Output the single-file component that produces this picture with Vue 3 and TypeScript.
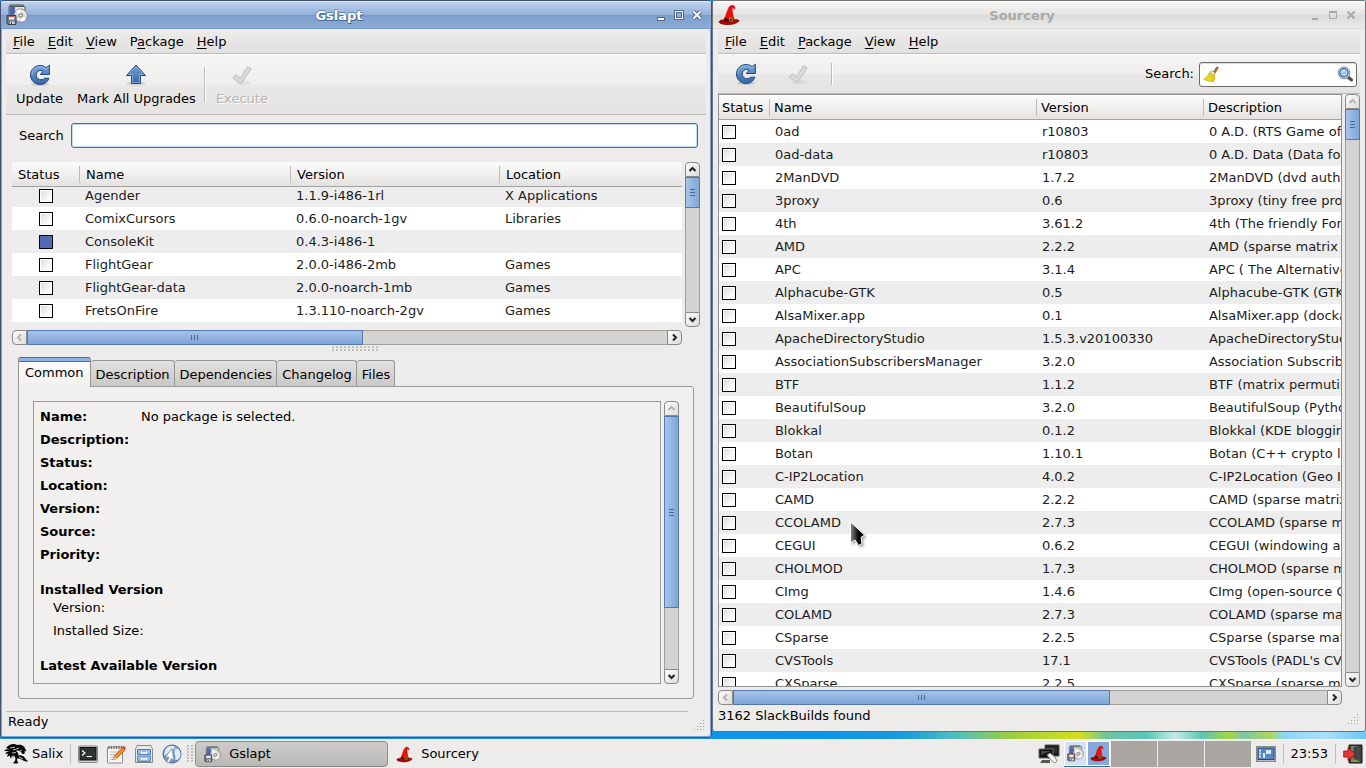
<script setup lang="ts">
import { onMounted, ref } from 'vue'

interface MenuEntry {
  before: string
  key: string
  after: string
}
interface Installed {
  name: string
  version: string
  location: string
  installed?: boolean
}
type Build = [name: string, version: string, description: string]

const gslaptMenu: MenuEntry[] = [
  { before: '', key: 'F', after: 'ile' },
  { before: '', key: 'E', after: 'dit' },
  { before: '', key: 'V', after: 'iew' },
  { before: 'P', key: 'a', after: 'ckage' },
  { before: '', key: 'H', after: 'elp' },
]
const sourceryMenu: MenuEntry[] = [
  { before: '', key: 'F', after: 'ile' },
  { before: '', key: 'E', after: 'dit' },
  { before: '', key: 'P', after: 'ackage' },
  { before: '', key: 'V', after: 'iew' },
  { before: '', key: 'H', after: 'elp' },
]

const packages: Installed[] = [
  { name: 'Agender', version: '1.1.9-i486-1rl', location: 'X Applications' },
  { name: 'ComixCursors', version: '0.6.0-noarch-1gv', location: 'Libraries' },
  { name: 'ConsoleKit', version: '0.4.3-i486-1', location: '', installed: true },
  { name: 'FlightGear', version: '2.0.0-i486-2mb', location: 'Games' },
  { name: 'FlightGear-data', version: '2.0.0-noarch-1mb', location: 'Games' },
  { name: 'FretsOnFire', version: '1.3.110-noarch-2gv', location: 'Games' },
  { name: '', version: '', location: '' },
]

const builds: Build[] = [
  ['0ad', 'r10803', '0 A.D. (RTS Game of Ancient Warfare)'],
  ['0ad-data', 'r10803', '0 A.D. Data (Data for 0ad)'],
  ['2ManDVD', '1.7.2', '2ManDVD (dvd authoring)'],
  ['3proxy', '0.6', '3proxy (tiny free proxy server)'],
  ['4th', '3.61.2', '4th (The friendly Forth Compiler)'],
  ['AMD', '2.2.2', 'AMD (sparse matrix ordering)'],
  ['APC', '3.1.4', 'APC ( The Alternative PHP Cache)'],
  ['Alphacube-GTK', '0.5', 'Alphacube-GTK (GTK theme)'],
  ['AlsaMixer.app', '0.1', 'AlsaMixer.app (dockapp mixer)'],
  ['ApacheDirectoryStudio', '1.5.3.v20100330', 'ApacheDirectoryStudio (LDAP tool)'],
  ['AssociationSubscribersManager', '3.2.0', 'Association Subscribers Manager'],
  ['BTF', '1.1.2', 'BTF (matrix permuting)'],
  ['BeautifulSoup', '3.2.0', 'BeautifulSoup (Python parser)'],
  ['Blokkal', '0.1.2', 'Blokkal (KDE blogging client)'],
  ['Botan', '1.10.1', 'Botan (C++ crypto library)'],
  ['C-IP2Location', '4.0.2', 'C-IP2Location (Geo IP library)'],
  ['CAMD', '2.2.2', 'CAMD (sparse matrix ordering)'],
  ['CCOLAMD', '2.7.3', 'CCOLAMD (sparse matrix)'],
  ['CEGUI', '0.6.2', 'CEGUI (windowing and widgets)'],
  ['CHOLMOD', '1.7.3', 'CHOLMOD (sparse matrix)'],
  ['CImg', '1.4.6', 'CImg (open-source C++ toolkit)'],
  ['COLAMD', '2.7.3', 'COLAMD (sparse matrix)'],
  ['CSparse', '2.2.5', 'CSparse (sparse matrix)'],
  ['CVSTools', '17.1', "CVSTools (PADL's CVS tools)"],
  ['CXSparse', '2.2.5', 'CXSparse (sparse matrix)'],
]

const tabs = ['Common', 'Description', 'Dependencies', 'Changelog', 'Files']
const activeTab = ref('Common')
const fields = ['Name:', 'Description:', 'Status:', 'Location:', 'Version:', 'Source:', 'Priority:']

const gslaptSearch = ref('')
const sourcerySearch = ref('')
const packageList = ref<HTMLElement | null>(null)

onMounted(() => {
  if (packageList.value) packageList.value.scrollTop = 3
})
</script>

<template>
  <svg class="defs" aria-hidden="true">
    <defs>
      <linearGradient id="blueFill" x1="0" y1="0" x2="0" y2="1">
        <stop offset="0" stop-color="#7ba5d8" />
        <stop offset="1" stop-color="#3465a4" />
      </linearGradient>
      <linearGradient id="pointerFill" x1="0" y1="0" x2="1" y2="0">
        <stop offset="0" stop-color="#8a8a8a" />
        <stop offset=".6" stop-color="#000" />
      </linearGradient>
      <symbol id="refresh" viewBox="0 0 24 24">
        <ellipse cx="12" cy="21" rx="9" ry="2" fill="#000" opacity=".12" />
        <path d="M18 4.700 21.400 2.200V11.500H12.300L15 8.200C12.500 6.500 8.300 8 8.300 12C8.300 16.500 13.600 18.200 16.800 15.200H21C19.400 19.400 15.900 21.500 12 21.500C6.800 21.500 2.500 17.300 2.500 12C2.500 6.700 6.800 2.500 12 2.500C14.400 2.500 16.600 3.200 18 4.700Z" fill="url(#blueFill)" stroke="#204a87" stroke-width="1" />
        <path d="M4 12A8 8 0 0 1 17.500 6L20.400 4.200" fill="none" stroke="#9dc0ea" stroke-width=".9" />
      </symbol>
      <symbol id="upgrade" viewBox="0 0 24 24">
        <ellipse cx="12" cy="20.500" rx="10" ry="2" fill="#000" opacity=".12" />
        <path d="M12 2 21.500 12.500H16.500V20.500H7.500V12.500H2.500Z" fill="url(#blueFill)" stroke="#204a87" />
        <path d="M12 3.600 19.200 11.500H15.500V19.500H8.500V11.500H4.800Z" fill="none" stroke="#8fb4e0" stroke-width=".8" />
      </symbol>
      <symbol id="apply" viewBox="0 0 24 24">
        <ellipse cx="13" cy="20" rx="8" ry="2" fill="#000" opacity=".05" />
        <path d="M3 15 6.300 11.700 10.300 15.300 17.300 3.800 21.300 5.800 11.200 20.800Z" fill="#d8dad6" stroke="#bfc1bd" stroke-linejoin="round" />
      </symbol>
      <symbol id="package" viewBox="0 0 22 22">
        <path d="M4 1H17L19 3V15H3V3Z" fill="#e5e5e1" stroke="#555753" />
        <path d="M3.500 3H9V14H3.500Z" fill="#4d66b5" />
        <path d="M4 1.500H17.500L18.500 3H4Z" fill="#555753" />
        <circle cx="14.700" cy="11.500" r="6.600" fill="#e3e3e0" stroke="#888a85" />
        <path d="M14.700 11.500 10 7A6 6 0 0 1 15 5.500ZM14.700 11.500 20 15A6 6 0 0 1 15 17.500Z" fill="#fff" />
        <circle cx="14.700" cy="11.500" r="2" fill="#b8bab5" stroke="#7d7f7a" />
        <circle cx="14.700" cy="11.500" r=".7" fill="#fff" />
        <path d="M1 11.500H10V20.500H2L1 19.500Z" fill="#69798c" stroke="#3d4043" />
        <path d="M3 12H8.500V15.500H3Z" fill="#fff" />
        <path d="M3 12H8.500V13.300H3Z" fill="#d34b3f" />
        <path d="M4 17.500H8.500V20H4Z" fill="#dfe2e4" />
        <path d="M5 18H6V20H5Z" fill="#333" />
      </symbol>
      <symbol id="hat" viewBox="0 0 24 24">
        <path d="M6.500 17C9 13 9.500 8 11.500 4.500C13 1.500 16 .6 17.600 2.300C18.700 3.400 18.700 5.200 18 5.800C17.400 4.600 16.500 4.300 15.300 5C16 9 16.200 14 17.800 17.500C15 20.500 9 20.500 6.500 17Z" fill="#f40a06" stroke="#a80000" stroke-width=".5" />
        <path d="M1 19.500C2.500 17 5 17.300 7 17.500C10 19.200 14.500 19 17.700 17.300C20 17 22.500 17 23 18.300C21.500 20.500 17 22.500 11 22.500C6 22.500 2 21.500 1 19.500Z" fill="#b40000" stroke="#5e0000" stroke-width=".7" />
        <path d="M7.400 14.700C10 16.700 14 16.600 16.800 14.600L17.700 17.300C14.500 19.400 9.500 19.300 6.500 17.400Z" fill="#301010" />
        <path d="M12.500 15.300H16V18.500H12.500Z" fill="none" stroke="#c8a000" stroke-width="1" />
      </symbol>
    </defs>
  </svg>

  <div class="screen">
    <main class="desktop">
      <section class="window active" aria-label="Gslapt">
        <header class="titlebar">
          <svg class="app-icon"><use href="#package" /></svg>
          <h1>Gslapt</h1>
          <button class="wm" aria-label="Minimize"><svg viewBox="0 0 18 18"><path class="edge" d="M5 11H13V15H5Z" /><path class="ink" d="M6 12H12V14H6Z" /></svg></button>
          <button class="wm" aria-label="Maximize"><svg viewBox="0 0 18 18"><path class="edge" d="M4 4H14V14H4Z" /><path class="ink" d="M5 5H13V13H5Z" /><path class="edge" d="M6 6H12V12H6Z" /><path class="ink-hole" d="M7 7H11V11H7Z" /></svg></button>
          <button class="wm" aria-label="Close"><svg viewBox="0 0 18 18"><path class="edge-line" d="M5.500 5.500 12.500 12.500M12.500 5.500 5.500 12.500" /><path class="ink-line" d="M5.500 5.500 12.500 12.500M12.500 5.500 5.500 12.500" /></svg></button>
        </header>
        <div class="content">
          <nav class="menubar">
            <button v-for="m in gslaptMenu" :key="m.key">{{ m.before }}<u>{{ m.key }}</u>{{ m.after }}</button>
          </nav>
          <div class="toolbar labelled">
            <button class="tool"><svg><use href="#refresh" /></svg>Update</button>
            <button class="tool"><svg><use href="#upgrade" /></svg>Mark All Upgrades</button>
            <span class="sep"></span>
            <button class="tool" disabled><svg><use href="#apply" /></svg>Execute</button>
          </div>
          <div class="search-row">
            <label for="gslapt-search">Search</label>
            <input id="gslapt-search" v-model="gslaptSearch" type="text" />
          </div>
          <div class="list-pane">
            <div ref="packageList" class="list">
              <table class="packages">
                <colgroup><col class="c1" /><col class="c2" /><col class="c3" /><col /></colgroup>
                <thead><tr><th>Status</th><th>Name</th><th>Version</th><th>Location</th></tr></thead>
                <tbody>
                  <tr v-for="(p, i) in packages" :key="i">
                    <td><input type="checkbox" :checked="p.installed" :aria-label="p.name || 'Package'" /></td>
                    <td>{{ p.name }}</td><td>{{ p.version }}</td><td>{{ p.location }}</td>
                  </tr>
                </tbody>
              </table>
            </div>
            <div class="scroll vertical">
              <button aria-label="Scroll up"><svg viewBox="0 0 13 13"><path d="M3.500 8 6.500 5 9.500 8" /></svg></button>
              <span class="thumb small"></span>
              <span class="track"></span>
              <button aria-label="Scroll down"><svg viewBox="0 0 13 13"><path d="M3.500 5 6.500 8 9.500 5" /></svg></button>
            </div>
            <div class="scroll horizontal">
              <button disabled aria-label="Scroll left"><svg viewBox="0 0 13 13"><path d="M8 3.500 5 6.500 8 9.500" /></svg></button>
              <span class="thumb half"></span>
              <span class="track rest-wide"></span>
              <button aria-label="Scroll right"><svg viewBox="0 0 13 13"><path d="M5 3.500 8 6.500 5 9.500" /></svg></button>
            </div>
          </div>
          <div class="splitter"></div>
          <div class="notebook">
            <div class="tabs" role="tablist">
              <button v-for="t in tabs" :key="t" role="tab" :aria-selected="t === activeTab" :class="{ current: t === activeTab }" @click="activeTab = t">{{ t }}</button>
            </div>
            <div class="page">
              <div class="details">
                <dl>
                  <div v-for="(f, i) in fields" :key="f"><dt>{{ f }}</dt><dd>{{ i === 0 ? 'No package is selected.' : '' }}</dd></div>
                </dl>
                <h2>Installed Version</h2>
                <p>Version:</p>
                <p>Installed Size:</p>
                <h2>Latest Available Version</h2>
              </div>
              <div class="scroll vertical">
                <button disabled aria-label="Scroll up"><svg viewBox="0 0 13 13"><path d="M3.500 8 6.500 5 9.500 8" /></svg></button>
                <span class="thumb tall"></span>
                <span class="track rest-tall"></span>
                <button aria-label="Scroll down"><svg viewBox="0 0 13 13"><path d="M3.500 5 6.500 8 9.500 5" /></svg></button>
              </div>
            </div>
          </div>
          <footer class="statusbar">
            <span>Ready</span>
            <svg class="grip" viewBox="0 0 12 12"><path d="M9 0h1v1h-1zM9 3h1v1h-1zM6 3h1v1h-1zM9 6h1v1h-1zM6 6h1v1h-1zM3 6h1v1h-1zM9 9h1v1h-1zM6 9h1v1h-1zM3 9h1v1h-1zM0 9h1v1h-1z" /></svg>
          </footer>
        </div>
      </section>

      <section class="window inactive" aria-label="Sourcery">
        <header class="titlebar">
          <svg class="app-icon"><use href="#hat" /></svg>
          <h1>Sourcery</h1>
          <button class="wm" aria-label="Minimize"><svg viewBox="0 0 18 18"><path class="ink" d="M6 12H12V14H6Z" /></svg></button>
          <button class="wm" aria-label="Maximize"><svg viewBox="0 0 18 18"><path class="ink" fill-rule="evenodd" d="M5 5H13V13H5ZM6 7V12H12V7Z" /></svg></button>
          <button class="wm" aria-label="Close"><svg viewBox="0 0 18 18"><path class="ink-line" d="M5.500 5.500 12.500 12.500M12.500 5.500 5.500 12.500" /></svg></button>
        </header>
        <div class="content">
          <nav class="menubar">
            <button v-for="m in sourceryMenu" :key="m.key">{{ m.before }}<u>{{ m.key }}</u>{{ m.after }}</button>
          </nav>
          <div class="toolbar compact">
            <button class="tool" aria-label="Update"><svg><use href="#refresh" /></svg></button>
            <button class="tool" aria-label="Execute" disabled><svg><use href="#apply" /></svg></button>
            <span class="sep"></span>
            <label for="sourcery-search">Search:</label>
            <div class="entry">
              <svg class="broom" viewBox="0 0 16 16">
                <path d="M10.500 6 13.500 1.300C14 .5 15.500 1 15 2.200L12 7Z" fill="#c17d11" stroke="#6e3f05" stroke-width=".7" />
                <path d="M8 4.500 12.500 7.500 11.500 9.500 6.500 6.500Z" fill="#eeeeec" stroke="#b39a30" stroke-width=".6" />
                <path d="M6.500 6.500 11.500 9.500C12 12 11.500 14 10.500 15.500C6.500 15.500 3 14.500 .8 13C3.500 11.500 5.500 9 6.500 6.500Z" fill="#f0df30" stroke="#c4a000" stroke-width=".7" />
                <path d="M7 8C6 11 5 12.500 3.500 13.700M8.700 9C8 12 7.400 13.500 6.500 14.700M10.300 10C10.300 12 9.800 14 9 15" fill="none" stroke="#bda000" stroke-width=".6" />
              </svg>
              <input id="sourcery-search" v-model="sourcerySearch" type="text" />
              <svg class="lens" viewBox="0 0 16 16">
                <path d="M11 11 14.500 14" stroke="#4b4d49" stroke-width="3" stroke-linecap="round" />
                <circle cx="7" cy="6.800" r="5.900" fill="#e8f0fa" stroke="#85878a" />
                <circle cx="7" cy="6.800" r="4.200" fill="#a8c8f0" stroke="#3465a4" stroke-width="1.200" />
                <path d="M4.500 6.500A2.800 2.800 0 0 1 8 4.300" fill="none" stroke="#fff" />
              </svg>
            </div>
          </div>
          <div class="build-pane">
            <div class="list framed">
              <table class="builds">
                <colgroup><col class="c1" /><col class="c2" /><col class="c3" /><col /></colgroup>
                <thead><tr><th>Status</th><th>Name</th><th>Version</th><th>Description</th></tr></thead>
                <tbody>
                  <tr v-for="b in builds" :key="b[0]">
                    <td><input type="checkbox" :aria-label="b[0]" /></td>
                    <td>{{ b[0] }}</td><td>{{ b[1] }}</td><td>{{ b[2] }}</td>
                  </tr>
                </tbody>
              </table>
            </div>
            <div class="scroll vertical">
              <button disabled aria-label="Scroll up"><svg viewBox="0 0 13 13"><path d="M3.500 8 6.500 5 9.500 8" /></svg></button>
              <span class="thumb small"></span>
              <span class="track"></span>
              <button aria-label="Scroll down"><svg viewBox="0 0 13 13"><path d="M3.500 5 6.500 8 9.500 5" /></svg></button>
            </div>
            <div class="scroll horizontal">
              <button disabled aria-label="Scroll left"><svg viewBox="0 0 13 13"><path d="M8 3.500 5 6.500 8 9.500" /></svg></button>
              <span class="thumb wide"></span>
              <span class="track rest-short"></span>
              <button aria-label="Scroll right"><svg viewBox="0 0 13 13"><path d="M5 3.500 8 6.500 5 9.500" /></svg></button>
            </div>
          </div>
          <footer class="statusbar">
            <span>3162 SlackBuilds found</span>
            <svg class="grip" viewBox="0 0 12 12"><path d="M9 0h1v1h-1zM9 3h1v1h-1zM6 3h1v1h-1zM9 6h1v1h-1zM6 6h1v1h-1zM3 6h1v1h-1zM9 9h1v1h-1zM6 9h1v1h-1zM3 9h1v1h-1zM0 9h1v1h-1z" /></svg>
          </footer>
        </div>
      </section>

      <svg class="pointer" viewBox="0 0 22 30">
        <path class="shadow" d="M3 6V26L8 23 11 28.500 15 26.500 14 20.500 17.500 18Z" />
        <path d="M1.500 3V24L6 21 9.500 26.500 13 24.500 12 18.500 15.500 16Z" fill="url(#pointerFill)" stroke="#fff" />
      </svg>
    </main>

    <footer class="panel">
      <button class="salix">
        <svg viewBox="0 0 24 22">
          <path d="M2 5C5 1 10 0 13 2C17 1 21 3 21 6C23 7 22 9 20 8.500C22 10 20 12 18 10.500C17 8 14 7 12 8C14 9 15 11 14 12.500C17 11.500 20 13 21 15C22 17 24 17.500 24 18.500C20 19 18 16 15 15.500C13 15 12 17 14 19C15 20.500 12 21 9 20L11 18C12 15 11 13 9 12L10 15 8 12.500 7 16 5.500 12.500 3 14 4 10.500 1 11C2 9 4 8 6 8L0 8C1 6 4 6 6 6.500Z" fill="#080808" />
          <path d="M6 5 11 4M9 7 15 5M8 10 12 9.500M16 8 18 7M15 14 19 16" stroke="#eceae8" stroke-width=".8" />
        </svg>
        Salix
      </button>
      <span class="rule"></span>
      <button class="launcher" aria-label="Terminal">
        <svg viewBox="0 0 20 20"><rect x=".5" y="2" width="19" height="16.500" rx="1" fill="#d0d0cd" stroke="#888a85" /><rect x="2" y="3.500" width="16" height="12.500" fill="#2e3436" stroke="#111" /><path d="M4 6.500 7 9 4 11.500" fill="none" stroke="#fff" stroke-width="1.200" /><path d="M8.500 12.500H14" stroke="#fff" /></svg>
      </button>
      <button class="launcher" aria-label="Text editor">
        <svg viewBox="0 0 20 20"><rect x="1.500" y="3" width="15" height="16" rx="1" fill="#f6f6f4" stroke="#888a85" /><path d="M3 2V5M5.500 2V5M8 2V5M10.500 2V5M13 2V5M15.500 2V5" stroke="#666" stroke-width="1.200" /><path d="M4 8H12M4 10.500H11M4 13H8M4 15.500H7" stroke="#bbb" /><path d="M7 16 8 12.500 16 3.500 19 6 10.500 14.500Z" fill="#f08c2e" stroke="#b4540a" stroke-width=".7" /><path d="M16 3.500 17.500 1.500 20 4 19 6Z" fill="#dd4040" /><path d="M7 16 8 12.500 10.500 14.500Z" fill="#e9d2a8" /></svg>
      </button>
      <button class="launcher" aria-label="File manager">
        <svg viewBox="0 0 20 20"><path d="M3 1.500H17L18.500 5V18.500H1.500V5Z" fill="#e9e9e6" stroke="#8a8c88" /><path d="M3.500 5.500H16.500V10.500H3.500ZM3.500 12H16.500V17.500H3.500Z" fill="#97bce4" stroke="#5781b5" /><path d="M7.500 7.500V9H12.500V7.500M7.500 13.500V15H12.500V13.500" fill="none" stroke="#fff" stroke-width="1.300" /></svg>
      </button>
      <button class="launcher" aria-label="Web browser">
        <svg viewBox="0 0 20 20"><circle cx="10" cy="10" r="9" fill="#6f9bcd" stroke="#44648c" /><path d="M3 6C6 1 11 1 13 3C12 7 8 5 8 8C5 9 4 12 2 11ZM13 5C17 3 19 8 18.500 12C17 16 14 17 13 15C15 12 11 11 13 5Z" fill="#dce9f7" /><path d="M10 4.500 3.500 13 7 13.300 4.500 18 7 19 9.500 14.500 12 17Z" fill="#fff" stroke="#7c8288" stroke-width=".8" /></svg>
      </button>
      <span class="dots"></span>
      <button class="task pressed"><svg><use href="#package" /></svg>Gslapt</button>
      <button class="task"><svg><use href="#hat" /></svg>Sourcery</button>
      <span class="spring"></span>
      <svg class="network" viewBox="0 0 22 20"><path d="M7 1H21V12H7Z" fill="#16181a" stroke="#555" /><path d="M9 3H19V9H9Z" fill="#2e3436" /><path d="M10 13H18V15H10Z" fill="#777" /><path d="M1 5H15V14H1Z" fill="#111" stroke="#666" /><path d="M3 7H13L3 11Z" fill="#444b4e" /><path d="M4 16H12V19H2Z" fill="#555" /><path d="M9 11 12 9 17 13 19 17 17 19 13 16Z" fill="#f2f2ef" stroke="#888" /></svg>
      <div class="pager">
        <button class="space on" aria-label="Workspace 1">
          <span class="mini front"><svg><use href="#package" /></svg></span>
          <span class="mini"><svg><use href="#hat" /></svg></span>
        </button>
        <button v-for="n in 3" :key="n" class="space" :aria-label="'Workspace ' + (n + 1)"></button>
      </div>
      <svg class="show-desktop" viewBox="0 0 20 18"><rect x=".5" y="1.500" width="19" height="15" fill="#b9bcc0" stroke="#888a85" /><rect x="2" y="3" width="16" height="11.500" fill="#5a86c0" stroke="#204a87" /><path d="M3 4.500H5V6.500H3ZM3 7.500H5V9.500H3ZM3 10.500H5V12.500H3ZM7 8H9V13H7ZM10 5H15V9H10Z" fill="#dbe8f7" /></svg>
      <span class="rule"></span>
      <time>23:53</time>
      <span class="rule"></span>
      <button class="launcher exit" aria-label="Log out">
        <svg viewBox="0 0 20 20"><path d="M6 1H19V19H6Z" fill="#3a3d3a" stroke="#1c1e1c" /><path d="M8 2H18V18H8Z" fill="#7a7c79" /><path d="M11 3.500 18 2V18L11 16.500Z" fill="#464845" stroke="#222" stroke-width=".5" /><path d="M8 18 11 15 18 18Z" fill="#8aa128" /><path d="M.7 7H5V3.500L12.500 10 5 16.500V13H.7Z" fill="#dd3c3c" stroke="#a40000" stroke-width=".8" /></svg>
      </button>
    </footer>
  </div>
</template>

<style>
html,
body {
  margin: 0;
  overflow: hidden;
}
</style>

<style scoped>
* {
  box-sizing: border-box;
}
.defs {
  position: absolute;
  width: 0;
  height: 0;
}
.screen {
  display: flex;
  flex-direction: column;
  height: 100vh;
  color: #000;
  font: 13px/16px 'DejaVu Sans', sans-serif;
}
button,
input {
  margin: 0;
  padding: 0;
  border: 0;
  background: none;
  color: inherit;
  font: inherit;
}
.desktop {
  position: relative;
  display: flex;
  flex: 1;
  min-height: 0;
  padding-bottom: 1px;
  background: linear-gradient(90deg, #1c8fe0 0, #0c94ea 60%, #169bdf 66%, #4fbfc0 70%, #9ccf3c 74%, #d3e01c 79%, #6fc4a0 81%, #5cc6b8 84%, #c5ece5 86%, #5cc5b4 88%, #a5d640 90%, #7cc8a8 91%, #a9d85c 93%, #8fd6f8 94%, #a8e0fa 97%, #6fc4f8 100%);
}
.window {
  display: flex;
  flex-direction: column;
  min-width: 0;
  border: 1px solid;
  border-radius: 3px;
  background: #edecea;
}
.active {
  flex: 712;
  border-color: #41506c;
  box-shadow: inset 1px 0 #7fa5da, inset -1px -1px #7fa5da;
}
.inactive {
  flex: 654;
  margin-bottom: 6px;
  border-color: #737373;
}
.titlebar {
  display: flex;
  flex: 0 0 28px;
  align-items: center;
  padding: 0 5px;
  border-radius: 2px 2px 0 0;
}
.active .titlebar {
  border-top: 1px solid #dce8f8;
  border-bottom: 1px solid #7099d1;
  background: linear-gradient(#bdd1ec, #92b0da 50%, #7c9dca 50%, #8dabd6);
}
.inactive .titlebar {
  border-top: 1px solid #fff;
  border-bottom: 1px solid #dddcda;
  background: linear-gradient(#f5f5f4, #e5e4e3 50%, #dadad8 50%, #ebeae9);
}
.app-icon {
  width: 22px;
  height: 22px;
}
h1 {
  flex: 1;
  margin: 0;
  padding: 2px 2px 0 0;
  font-size: 13px;
  text-align: center;
}
.active h1 {
  color: #fff;
  text-shadow: 1px 1px #47679a, 0 1px #47679a, -1px 0 #6384b5, 0 -1px #6384b5;
}
.inactive h1 {
  color: #aaa9a7;
}
.wm {
  width: 18px;
  height: 18px;
}
.wm svg {
  display: block;
  width: 18px;
  height: 18px;
}
.edge {
  fill: #4b6792;
}
.ink {
  fill: #fff;
}
.ink-hole {
  fill: #8fadd7;
}
.edge-line {
  fill: none;
  stroke: #4b6792;
  stroke-width: 4;
}
.ink-line {
  fill: none;
  stroke: #fff;
  stroke-width: 2;
}
.inactive .ink {
  fill: #aaa9a7;
}
.inactive .ink-line {
  stroke: #aaa9a7;
}
.content {
  display: flex;
  flex: 1;
  flex-direction: column;
  min-height: 0;
  padding: 0 5px;
}
.menubar {
  display: flex;
  flex: 0 0 25px;
  gap: 13px;
  padding: 1px 7px 0;
  border-bottom: 1px solid #bcbbb9;
  background: linear-gradient(#edecea, #e1e0de);
}
.menubar u {
  text-underline-offset: 2px;
}
.toolbar {
  display: flex;
  align-items: center;
  border-top: 1px solid #fff;
  border-bottom: 1px solid #bcbbb9;
  background: linear-gradient(#f5f5f3, #efeeec 50%, #e9e8e6 50%, #e4e3e1);
}
.tool {
  display: flex;
  flex-direction: column;
  align-items: center;
  gap: 4px;
}
.tool svg {
  width: 24px;
  height: 24px;
}
.tool:disabled {
  color: #b5b4b2;
  text-shadow: 1px 1px #fff;
}
.sep {
  width: 2px;
  border-left: 1px solid #bdbcba;
  background: #fff;
}
.labelled {
  flex: 0 0 61px;
  gap: 14px;
  padding: 0 10px;
}
.labelled .sep {
  height: 35px;
  margin: 0 -4px 0 -6px;
}
.compact {
  flex: 0 0 40px;
  padding: 0 3px 0 16px;
}
.compact .tool + .tool {
  margin-left: 28px;
}
.compact .sep {
  height: 22px;
  margin-left: 21px;
}
.compact label {
  margin-left: auto;
}
.search-row {
  display: flex;
  align-items: center;
  gap: 7px;
  flex: 0 0 25px;
  margin: 8px 8px 0 13px;
}
.search-row input {
  flex: 1;
  height: 25px;
  padding: 0 4px;
  border: 1px solid #4a6c9d;
  border-radius: 3px;
  outline: 0;
  background: #fff;
  box-shadow: inset 0 0 0 1px #c5daf5;
}
.entry {
  display: flex;
  align-items: center;
  width: 158px;
  height: 25px;
  margin-left: 5px;
  padding: 0 3px;
  border: 1px solid #6b6a68;
  border-radius: 3px;
  background: #fff;
  box-shadow: inset 0 1px #ddd;
}
.entry input {
  flex: 1;
  min-width: 0;
  outline: 0;
}
.entry svg {
  flex: none;
  width: 16px;
  height: 16px;
}
.list-pane,
.build-pane {
  display: grid;
  grid-template-columns: minmax(0, 1fr) 15px;
  grid-template-rows: minmax(0, 1fr) 15px;
  gap: 3px;
  min-height: 0;
}
.list-pane {
  flex: 0 0 183px;
  margin: 14px 6px 0;
}
.build-pane {
  flex: 1;
}
.list {
  overflow: hidden;
  min-height: 0;
  background: #fff;
}
.framed {
  border: 1px solid #908f8d;
}
table {
  width: 100%;
  border-spacing: 0;
  table-layout: fixed;
}
.packages .c1 {
  width: 68px;
}
.packages .c2 {
  width: 211px;
}
.packages .c3 {
  width: 209px;
}
.builds .c1 {
  width: 51px;
}
.builds .c2 {
  width: 267px;
}
.builds .c3 {
  width: 167px;
}
th {
  position: sticky;
  top: 0;
  z-index: 1;
  height: 25px;
  padding: 1px 0 0 6px;
  border-bottom: 1px solid #a3a2a0;
  background: linear-gradient(#bdbcba, #bdbcba) right center / 1px 17px no-repeat, linear-gradient(#fbfbfa, #f1f0ef 50%, #e3e2e0);
  font-weight: 400;
  text-align: left;
  white-space: nowrap;
}
th:last-child {
  background: linear-gradient(#fbfbfa, #f1f0ef 50%, #e3e2e0);
}
.builds th {
  padding-left: 4px;
}
.builds th:first-child {
  padding-left: 3px;
}
td {
  overflow: hidden;
  height: 23px;
  padding: 0 0 0 5px;
  color: #1c1c1c;
  white-space: nowrap;
}
.packages td:first-child {
  padding: 0;
  text-align: center;
}
.builds td:first-child {
  padding-left: 3px;
}
.packages tbody tr:nth-child(odd),
.builds tbody tr:nth-child(even) {
  background: #ededed;
}
td input {
  display: block;
  width: 14px;
  height: 14px;
  border: 1px solid #000;
  appearance: none;
  background: linear-gradient(135deg, #d9d9d9, #fbfbfb 70%);
  box-shadow: inset 0 0 0 1px #fff;
}
.packages td input {
  margin: 0 auto;
}
td input:checked {
  background: #526ab4;
  box-shadow: none;
}
.scroll {
  display: flex;
}
.vertical {
  flex-direction: column;
  width: 15px;
}
.horizontal {
  height: 15px;
}
.scroll button {
  flex: 0 0 15px;
  border: 1px solid #8b8a88;
  background: linear-gradient(135deg, #fdfdfc, #dddcda);
}
.scroll svg {
  display: block;
  width: 13px;
  height: 13px;
  fill: none;
  stroke: #222;
  stroke-width: 2;
}
.scroll button:disabled svg {
  stroke: #b5b4b2;
}
.vertical button:first-child {
  border-radius: 4px 4px 0 0;
}
.vertical button:last-child {
  border-radius: 0 0 4px 4px;
}
.horizontal button:first-child {
  border-radius: 4px 0 0 4px;
}
.horizontal button:last-child {
  border-radius: 0 4px 4px 0;
}
.track {
  flex: 1;
  background: #d4d3d1;
}
.vertical .track {
  border: solid #a09f9d;
  border-width: 0 1px;
}
.horizontal .track {
  border: solid #a09f9d;
  border-width: 1px 0;
}
.thumb {
  border: 1px solid #5579ac;
}
.vertical .thumb {
  background: repeating-linear-gradient(#46689c 0 1px, transparent 1px 3px) center / 5px 7px no-repeat, linear-gradient(90deg, #a8c5ea, #7fa5d8);
}
.horizontal .thumb {
  background: repeating-linear-gradient(90deg, #46689c 0 1px, transparent 1px 3px) center / 7px 5px no-repeat, linear-gradient(#a5c2e8, #7fa5d8);
}
.small {
  flex: 0 0 31px;
}
.half {
  flex: 335;
}
.rest-wide {
  flex: 305;
}
.tall {
  flex: 192;
}
.rest-tall {
  flex: 61;
}
.wide {
  flex: 376;
}
.rest-short {
  flex: 218;
}
.splitter {
  flex: 0 0 6px;
  align-self: center;
  width: 48px;
  background: radial-gradient(circle at 1px 1px, #c0bfbd 0 1px, transparent 1px) 0 1px / 4px 3px;
}
.notebook {
  display: flex;
  flex: 1;
  flex-direction: column;
  min-height: 0;
  margin: 6px 12px 12px;
}
.tabs {
  display: flex;
  align-items: flex-end;
  height: 29px;
}
.tabs button {
  height: 26px;
  padding: 2px 4px 0 5px;
  border: 1px solid #969593;
  border-width: 1px 1px 0 0;
  border-radius: 3px 3px 0 0;
  background: linear-gradient(#e2e1df, #c9c8c6);
}
.tabs .current {
  position: relative;
  height: 30px;
  margin-bottom: -1px;
  padding: 0 6px;
  border: 1px solid #969593;
  border-top: 1px solid #4a6c9d;
  border-bottom: 0;
  background: linear-gradient(#8fb3e2 0 3px, #4a6c9d 3px 4px, #fbfbfa 4px, #f1f0ee);
}
.page {
  display: flex;
  flex: 1;
  gap: 3px;
  min-height: 0;
  padding: 14px;
  border: 1px solid #9b9a98;
  border-radius: 0 3px 3px 3px;
  background: #f1f0ee;
}
.details {
  flex: 1;
  overflow: hidden;
  padding: 3px 6px;
  border: 1px solid #9b9a98;
}
dl {
  margin: 0;
}
dl div {
  display: flex;
  line-height: 23px;
}
dt {
  width: 101px;
  font-weight: 700;
  white-space: nowrap;
}
dd {
  margin: 0;
}
h2 {
  margin: 17px 0 0;
  font-size: 13px;
  line-height: 13px;
}
.details p {
  margin: 0;
  padding-left: 13px;
  line-height: 23px;
}
.statusbar {
  display: flex;
  flex: 0 0 26px;
  align-items: center;
  justify-content: space-between;
}
.active .statusbar {
  padding: 0 0 5px 2px;
  background: linear-gradient(90deg, #bcbbb9 calc(100% - 18px), transparent 0) 0 0 / 100% 1px no-repeat;
}
.inactive .statusbar {
  padding-bottom: 5px;
}
.grip {
  align-self: flex-end;
  width: 12px;
  height: 12px;
  fill: #a09f9d;
}
.pointer {
  position: absolute;
  top: 519px;
  left: 849px;
  width: 22px;
  height: 30px;
}
.shadow {
  filter: blur(1px);
  opacity: .35;
}
.panel {
  display: flex;
  flex: 0 0 29px;
  align-items: center;
  padding: 0 3px 0 4px;
  border-top: 1px solid #fff;
  background: #edecea;
}
.panel button {
  display: flex;
  flex: none;
  align-items: center;
}
.salix {
  gap: 4px;
}
.salix svg {
  width: 24px;
  height: 22px;
}
.rule {
  width: 1px;
  height: 20px;
  margin: 0 7px;
  background: #c2c1bf;
}
.launcher {
  margin-right: 8px;
}
.launcher svg {
  width: 20px;
  height: 20px;
}
.dots {
  width: 7px;
  height: 18px;
  margin-left: -3px;
  background: radial-gradient(circle at 1px 1px, #c0bfbd 0 1px, transparent 1px) 0 0 / 4px 3px;
}
.task {
  gap: 8px;
  width: 193px;
  height: 26px;
  padding: 0 8px;
}
.task svg {
  width: 17px;
  height: 17px;
}
.pressed {
  margin-left: 1px;
  border: 1px solid #8d8c8a;
  border-radius: 4px;
  background: linear-gradient(#cfcdcb, #bab8b5);
}
.task:not(.pressed) {
  width: auto;
}
.spring {
  flex: 1;
}
.network {
  width: 22px;
  height: 20px;
  margin-right: 4px;
}
.pager {
  display: flex;
  gap: 1px;
  height: 26px;
}
.space {
  width: 46px;
  height: 26px;
  background: #aaa6a2;
}
.panel .on {
  gap: 2px;
  padding: 0 1px;
  border-bottom: 1px solid #3c68a8;
  background: #fff;
}
.mini {
  display: flex;
  flex: 1;
  align-items: center;
  justify-content: center;
  height: 23px;
  background: #85a9da;
}
.front {
  background: #d3e2f7;
}
.mini svg {
  width: 17px;
  height: 17px;
}
.show-desktop {
  width: 20px;
  height: 18px;
  margin-left: 5px;
}
.exit {
  margin: 0;
}
</style>
